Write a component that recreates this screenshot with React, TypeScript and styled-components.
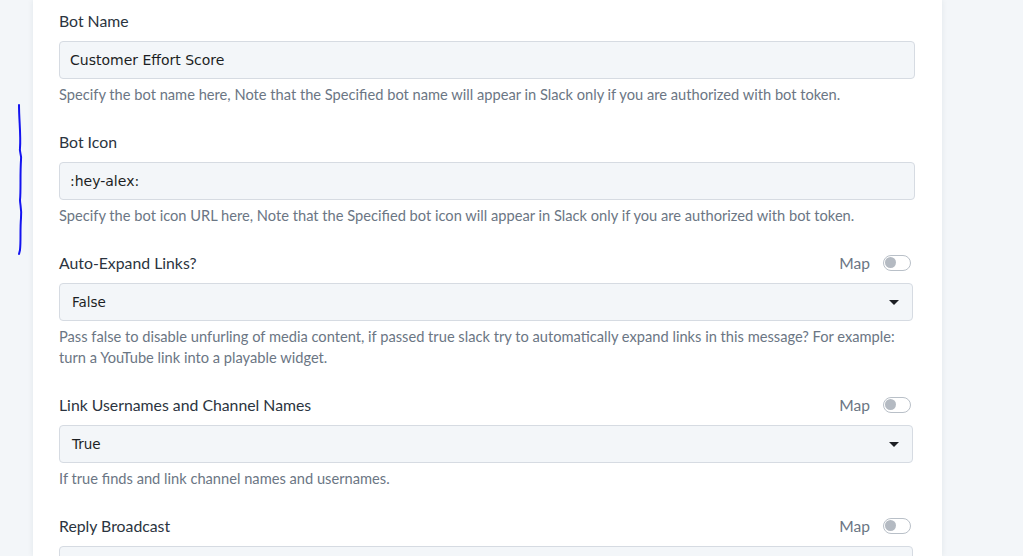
import React, { useState } from "react";
import styled, { createGlobalStyle } from "styled-components";

const GlobalStyle = createGlobalStyle`
    html, body {
        margin: 0;
        padding: 0;
        background: #f3f6f9;
        font-family: Lato, "Liberation Sans", sans-serif;
    }
    * {
        box-sizing: border-box;
    }
`;

const Page = styled.div`
    position: relative;
    display: flex;
    height: 556px;
    overflow: hidden;
    padding-left: 33px;
`;

const Card = styled.div`
    width: 909px;
    background: #ffffff;
    box-shadow: 0 0 6px rgba(30, 45, 70, 0.08);
    padding: 11px 27px 0 26px;
    display: flex;
    flex-direction: column;
    gap: 27px;
`;

const Field = styled.div`
    display: flex;
    flex-direction: column;
`;

const LabelRow = styled.div`
    display: flex;
    align-items: center;
    justify-content: space-between;
    height: 20px;
    margin-bottom: 10px;
    padding-right: 4px;
`;

const Label = styled.label`
    font-size: 15.8px;
    line-height: 20px;
    color: #2b3440;
`;

const MapSwitch = styled.div`
    display: flex;
    align-items: center;
    gap: 13px;
    font-size: 15.6px;
    color: #6b7684;
`;

const Toggle = styled.button<{ $on: boolean }>`
    width: 28px;
    height: 16px;
    border-radius: 8px;
    border: 1.5px solid #b9c0c8;
    background: #ffffff;
    padding: 0;
    position: relative;
    cursor: pointer;
    &::after {
        content: "";
        position: absolute;
        top: 1px;
        left: ${(p) => (p.$on ? "13px" : "1px")};
        width: 11px;
        height: 11px;
        border-radius: 50%;
        background: #b4bac2;
    }
`;

const TextInput = styled.input`
    height: 38px;
    width: 100%;
    border: 1px solid #d6dbe2;
    border-radius: 4px;
    background: #f3f6f9;
    padding: 0 10px;
    font-family: "DejaVu Sans", Verdana, sans-serif;
    font-size: 14px;
    color: #1c1f24;
    outline: none;
`;

const Select = styled.div`
    height: 38px;
    width: calc(100% - 2px);
    border: 1px solid #d6dbe2;
    border-radius: 4px;
    background: #f3f6f9;
    padding: 0 13px 0 12px;
    display: flex;
    align-items: center;
    justify-content: space-between;
    font-family: "DejaVu Sans", Verdana, sans-serif;
    font-size: 13.5px;
    color: #1c1f24;
`;

const Caret = styled.span`
    width: 0;
    height: 0;
    border-left: 5px solid transparent;
    border-right: 5px solid transparent;
    border-top: 5px solid #1c1f24;
`;

const Help = styled.p`
    margin: 5px 0 0;
    font-size: 11pt;
    line-height: 21px;
    color: #6b7684;
`;

const Scribble = styled.svg`
    position: absolute;
    left: 12px;
    top: 100px;
    pointer-events: none;
`;

type Item = {
    label: string;
    kind: "text" | "select";
    value: string;
    help?: string;
    map?: boolean;
};

const fields: Item[] = [
    {
        label: "Bot Name",
        kind: "text",
        value: "Customer Effort Score",
        help: "Specify the bot name here, Note that the Specified bot name will appear in Slack only if you are authorized with bot token.",
    },
    {
        label: "Bot Icon",
        kind: "text",
        value: ":hey-alex:",
        help: "Specify the bot icon URL here, Note that the Specified bot icon will appear in Slack only if you are authorized with bot token.",
    },
    {
        label: "Auto-Expand Links?",
        kind: "select",
        value: "False",
        map: true,
        help: "Pass false to disable unfurling of media content, if passed true slack try to automatically expand links in this message? For example: turn a YouTube link into a playable widget.",
    },
    {
        label: "Link Usernames and Channel Names",
        kind: "select",
        value: "True",
        map: true,
        help: "If true finds and link channel names and usernames.",
    },
    {
        label: "Reply Broadcast",
        kind: "select",
        value: "",
        map: true,
    },
];

function FieldBlock({ item }: { item: Item }) {
    const [mapped, setMapped] = useState(false);
    return (
        <Field>
            <LabelRow>
                <Label>{item.label}</Label>
                {item.map ? (
                    <MapSwitch>
                        Map
                        <Toggle $on={mapped} onClick={() => setMapped(!mapped)} />
                    </MapSwitch>
                ) : null}
            </LabelRow>
            {item.kind === "text" ? (
                <TextInput defaultValue={item.value} />
            ) : (
                <Select>
                    <span>{item.value}</span>
                    <Caret />
                </Select>
            )}
            {item.help ? <Help>{item.help}</Help> : null}
        </Field>
    );
}

export default function App() {
    return (
        <>
            <GlobalStyle />
            <Page>
                <Card>
                    {fields.map((f) => (
                        <FieldBlock key={f.label} item={f} />
                    ))}
                </Card>
                {/* pen mark down the left gutter */}
                <Scribble width="20" height="160" viewBox="0 0 20 160">
                    <path
                        d="M7 5 C7 20 9 35 8 48 C7 52 10 55 9 60 C8 75 9 90 8 100 C8 105 10 110 9 118 C8 130 9 140 8 150 L7 154"
                        fill="none"
                        stroke="#1414f0"
                        strokeWidth="2"
                        strokeLinecap="round"
                    />
                </Scribble>
            </Page>
        </>
    );
}
